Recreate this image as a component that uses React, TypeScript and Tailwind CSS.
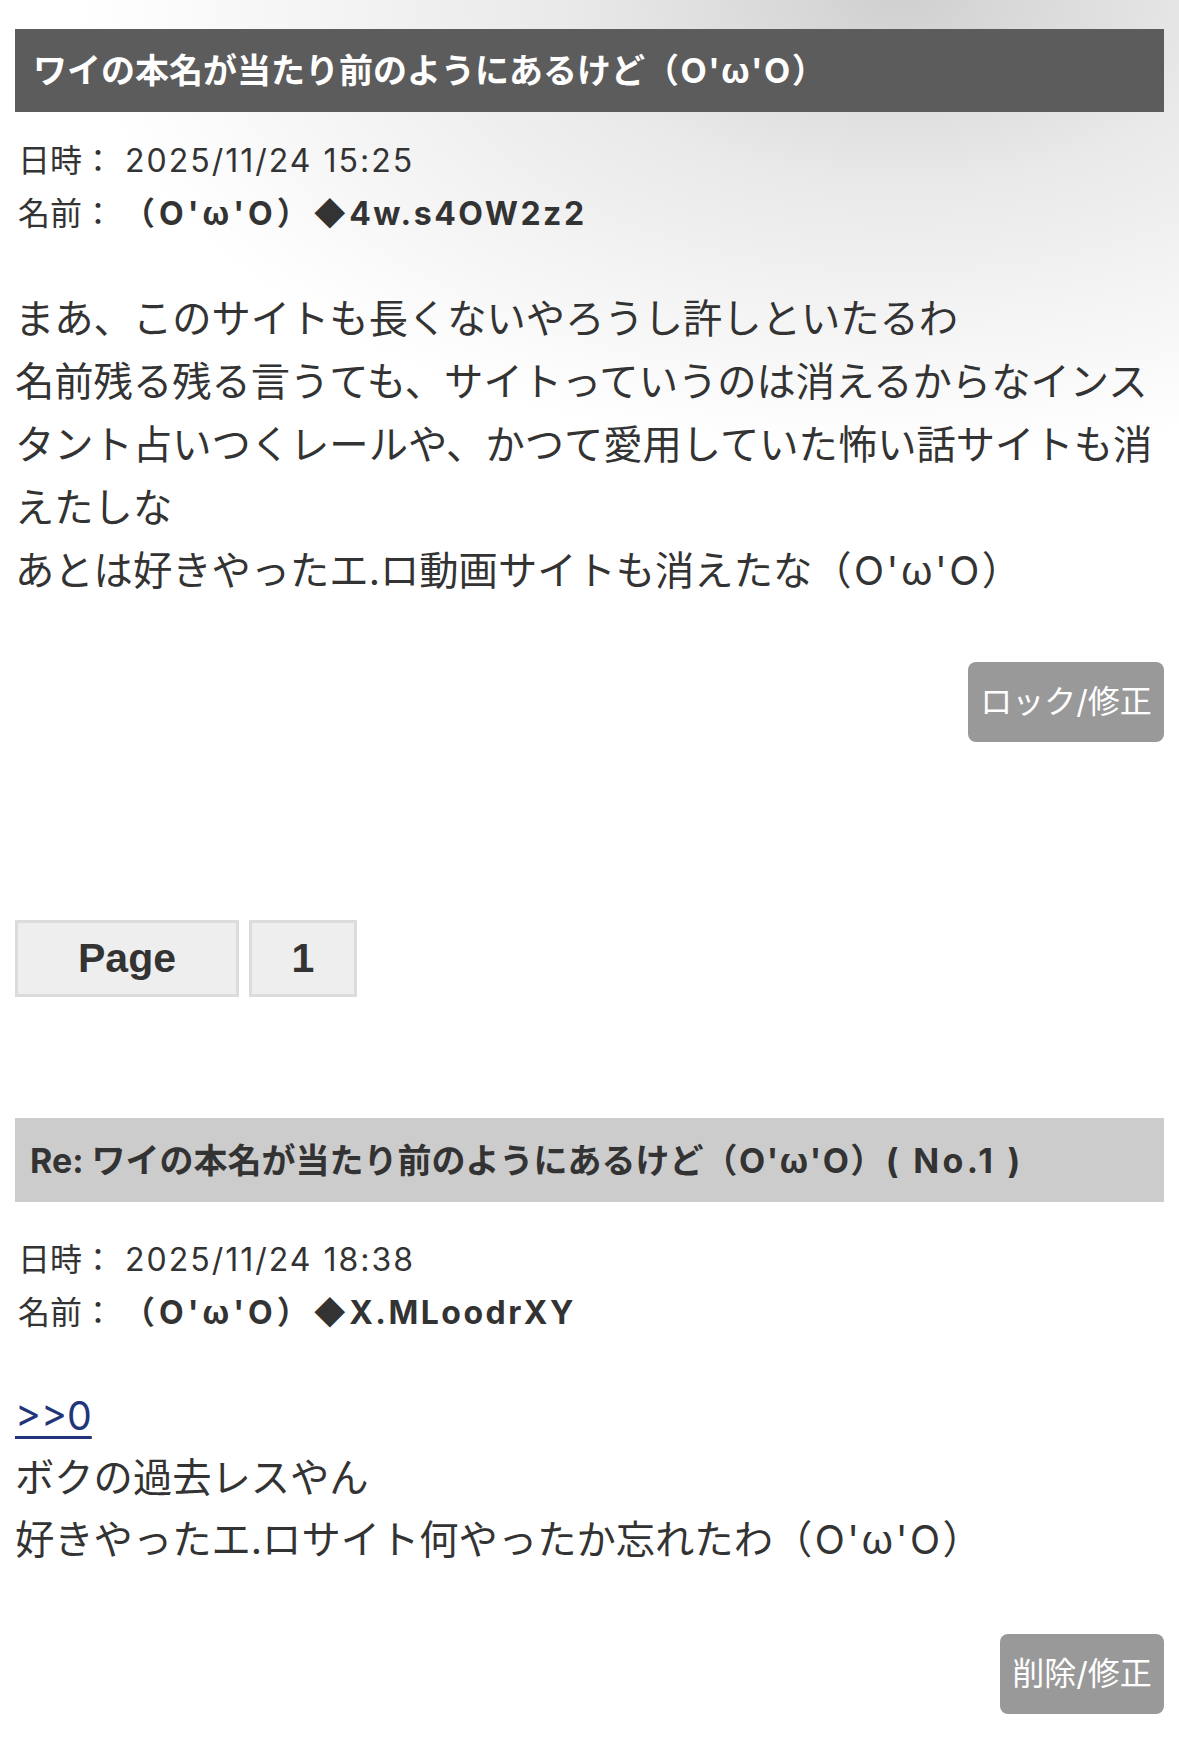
import React from "react";

const font = { fontFamily: 'Inter, "Noto Sans CJK JP", sans-serif' };

function Meta({ date, name }: { date: string; name: React.ReactNode }) {
  return (
    <div className="text-[32px] leading-[53px] text-[#333] px-[18px]">
      <div>
        日時：<span className="tracking-[2px]">&nbsp;{date}</span>
      </div>
      <div>
        名前：&nbsp;<span className="font-bold">{name}</span>
      </div>
    </div>
  );
}

export default function App() {
  return (
    <div
      style={font}
      className="w-[1179px] min-h-[1763px] pt-[29px] bg-white bg-[radial-gradient(ellipse_820px_460px_at_900px_0px,#d0d0d0_0%,#e9e9e9_40%,#ffffff_100%)]"
    >
      <div className="mx-[15px] h-[83px] flex items-center px-[18px] bg-[#5c5c5c] text-white font-bold text-[34px]">
        ワイの本名が当たり前のようにあるけど<span className="tracking-[1.5px]">（O'ω'O）</span>
      </div>

      <div className="mt-[22px]">
        <Meta
          date="2025/11/24 15:25"
          name={
            <>
              <span className="tracking-[4px]">（O'ω'O）</span>
              <span className="tracking-[2.5px]">◆4w.s4OW2z2</span>
            </>
          }
        />
      </div>

      <div className="mt-[47px] px-[15px] text-[39.3px] leading-[63px] text-[#333]">
        <div>まあ、このサイトも長くないやろうし許しといたるわ</div>
        <div>名前残る残る言うても、サイトっていうのは消えるからなインスタント占いつくレールや、かつて愛用していた怖い話サイトも消えたしな</div>
        <div>
          あとは好きやったエ.ロ動画サイトも消えたな<span className="tracking-[2.5px]">（O'ω'O）</span>
        </div>
      </div>

      <div className="mt-[60px] px-[15px] flex justify-end">
        <div className="h-[80px] w-[196px] rounded-[8px] bg-[#999] text-white text-[32px] flex items-center justify-center">
          ロック/修正
        </div>
      </div>

      <div className="mt-[178px] px-[15px] flex gap-[10px]" style={{ fontFamily: '"Liberation Sans", Arial, sans-serif' }}>
        <div className="w-[224px] h-[77px] border-[3px] border-[#dcdcdc] bg-[#eee] text-[#333] font-bold text-[41px] flex items-center justify-center">
          Page
        </div>
        <div className="w-[108px] h-[77px] border-[3px] border-[#dcdcdc] bg-[#eee] text-[#333] font-bold text-[41px] flex items-center justify-center">
          1
        </div>
      </div>

      <div className="mt-[121px] mx-[15px] h-[84px] flex items-center px-[15px] bg-[#cccccc] text-[#333] font-bold text-[34px]">
        Re: ワイの本名が当たり前のようにあるけど<span className="tracking-[1.5px]">（O'ω'O）</span>
        <span className="tracking-[3.3px]">( No.1 )</span>
      </div>

      <div className="mt-[31px]">
        <Meta
          date="2025/11/24 18:38"
          name={
            <>
              <span className="tracking-[4px]">（O'ω'O）</span>
              <span className="tracking-[2.5px]">◆X.MLoodrXY</span>
            </>
          }
        />
      </div>

      <div className="mt-[46px] px-[15px] text-[39.3px] leading-[62px] text-[#333]">
        <div>
          <a className="text-[#23357a] underline underline-offset-[6px] decoration-[3px]">&gt;&gt;0</a>
        </div>
        <div>ボクの過去レスやん</div>
        <div>
          好きやったエ.ロサイト何やったか忘れたわ<span className="tracking-[2.5px]">（O'ω'O）</span>
        </div>
      </div>

      <div className="mt-[63px] px-[15px] flex justify-end">
        <div className="h-[80px] w-[164px] rounded-[8px] bg-[#999] text-white text-[32px] flex items-center justify-center">
          削除/修正
        </div>
      </div>
    </div>
  );
}
